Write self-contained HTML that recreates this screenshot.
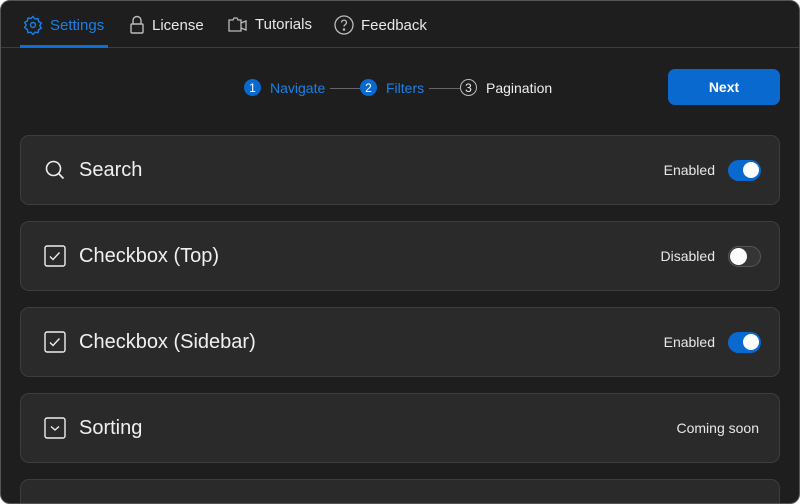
<!DOCTYPE html><html><head><style>
html,body{margin:0;background:#fff;width:800px;height:504px;overflow:hidden;font-family:"Liberation Sans",sans-serif}
.win{position:absolute;left:0;top:0;width:798px;height:502px;border:1px solid #555;border-radius:10px;background:#1e1e1e;overflow:hidden}
.tabs{position:absolute;left:0;top:0;width:100%;height:46px;border-bottom:1px solid #3c3c3c}
.tab{position:absolute;top:14px;font-size:15px;color:#e8e8e8;display:flex;align-items:center;gap:7px}
.ul{position:absolute;left:19px;top:44px;width:88px;height:3px;background:#0a6fd8}
.step{position:absolute;top:78px;font-size:14px;display:flex;align-items:center}
.c{width:17px;height:17px;border-radius:50%;font-size:12px;display:flex;align-items:center;justify-content:center;margin-right:9px}
.line{position:absolute;top:87px;height:1px;background:#666}
.btn{position:absolute;left:667px;top:68px;width:112px;height:36px;border-radius:7px;background:#0a69cf;color:#fff;font-size:14px;font-weight:bold;display:flex;align-items:center;justify-content:center}
.card{position:absolute;left:19px;width:758px;height:68px;border:1px solid #3d3d3d;border-radius:9px;background:#2a2a2a}
.card .t{position:absolute;left:58px;top:23px;font-size:20px;color:#f0f0f0}
.card .ic{position:absolute;left:23px;top:23px;width:22px;height:22px}
.card .s{position:absolute;right:64px;top:26px;font-size:14px;color:#e8e8e8}
.tg{position:absolute;right:18px;top:24px;width:33px;height:21px;border-radius:11px;box-sizing:border-box}
.tg.on{background:#0a69cf}
.tg.off{background:#353535;border:1px solid #555}
.tg i{position:absolute;top:2px;width:16px;height:16px;border-radius:50%;background:#fff}
</style></head><body><div class="win">
<div class="tabs">
<div class="tab" style="left:22px;color:#1a80e6"><svg width="20" height="20" viewBox="0 0 20 20" fill="none" stroke="#1a80e6" stroke-width="1.4"><path d="M10 1.5l2 2.5 3-.5.6 3 2.7 1.5-1.5 2.6 1.5 2.6-2.7 1.5-.6 3-3-.5-2 2.5-2-2.5-3 .5-.6-3L1.7 12.6 3.2 10 1.7 7.4 4.4 5.9 5 3l3 .5z"/><circle cx="10" cy="10" r="2.5"/></svg>Settings</div>
<div class="tab" style="left:128px"><svg width="16" height="20" viewBox="0 0 16 20" fill="none" stroke="#bbb" stroke-width="1.4"><path d="M4 9V5.5a4 4 0 018 0V9"/><rect x="2" y="9" width="12" height="9" rx="1"/></svg>License</div>
<div class="tab" style="left:227px"><svg width="20" height="18" viewBox="0 0 20 18" fill="none" stroke="#bbb" stroke-width="1.3"><path d="M1 5h4l1-2h3l1 2h3v11H1z"/><path d="M13 8l5-2v9l-5-2"/></svg>Tutorials</div>
<div class="tab" style="left:333px"><svg width="20" height="20" viewBox="0 0 20 20" fill="none" stroke="#bbb" stroke-width="1.3"><circle cx="10" cy="10" r="9"/><path d="M7.5 7.5a2.5 2.5 0 115 .3c0 1.5-2.5 2-2.5 3.7"/><circle cx="10" cy="14.5" r=".6" fill="#bbb"/></svg>Feedback</div>
<div class="ul"></div>
</div>
<div class="step" style="left:243px;color:#1a80e6"><span class="c" style="background:#0a69cf;color:#fff">1</span>Navigate</div>
<div class="line" style="left:329px;width:30px"></div>
<div class="step" style="left:359px;color:#1a80e6"><span class="c" style="background:#0a69cf;color:#fff">2</span>Filters</div>
<div class="line" style="left:428px;width:31px"></div>
<div class="step" style="left:459px;color:#eee"><span class="c" style="border:1px solid #bbb;width:15px;height:15px">3</span>Pagination</div>
<div class="btn">Next</div>

<div class="card" style="top:134px"><svg class="ic" viewBox="0 0 22 22" fill="none" stroke="#eee" stroke-width="1.6"><circle cx="9.5" cy="9.5" r="7"/><path d="M14.5 14.5l5 5"/></svg><div class="t">Search</div><div class="s">Enabled</div><div class="tg on"><i style="right:2px"></i></div></div>
<div class="card" style="top:220px"><svg class="ic" viewBox="0 0 22 22" fill="none" stroke="#eee" stroke-width="1.4"><rect x="1" y="1" width="20" height="20" rx="2"/><path d="M6 11.5l3 3 6.5-7"/></svg><div class="t">Checkbox (Top)</div><div class="s">Disabled</div><div class="tg off"><i style="left:1px;top:1px;width:17px;height:17px"></i></div></div>
<div class="card" style="top:306px"><svg class="ic" viewBox="0 0 22 22" fill="none" stroke="#eee" stroke-width="1.4"><rect x="1" y="1" width="20" height="20" rx="2"/><path d="M6 11.5l3 3 6.5-7"/></svg><div class="t">Checkbox (Sidebar)</div><div class="s">Enabled</div><div class="tg on"><i style="right:2px"></i></div></div>
<div class="card" style="top:392px"><svg class="ic" viewBox="0 0 22 22" fill="none" stroke="#eee" stroke-width="1.4"><rect x="1" y="1" width="20" height="20" rx="2"/><path d="M7 9.5l4 3.5 4-3.5"/></svg><div class="t">Sorting</div><div class="s" style="right:20px">Coming soon</div></div>
<div class="card" style="top:478px;height:40px"><svg class="ic" viewBox="0 0 22 22" fill="none" stroke="#eee" stroke-width="1.4"><rect x="1" y="1" width="20" height="20" rx="2"/></svg></div>
</div></body></html>
